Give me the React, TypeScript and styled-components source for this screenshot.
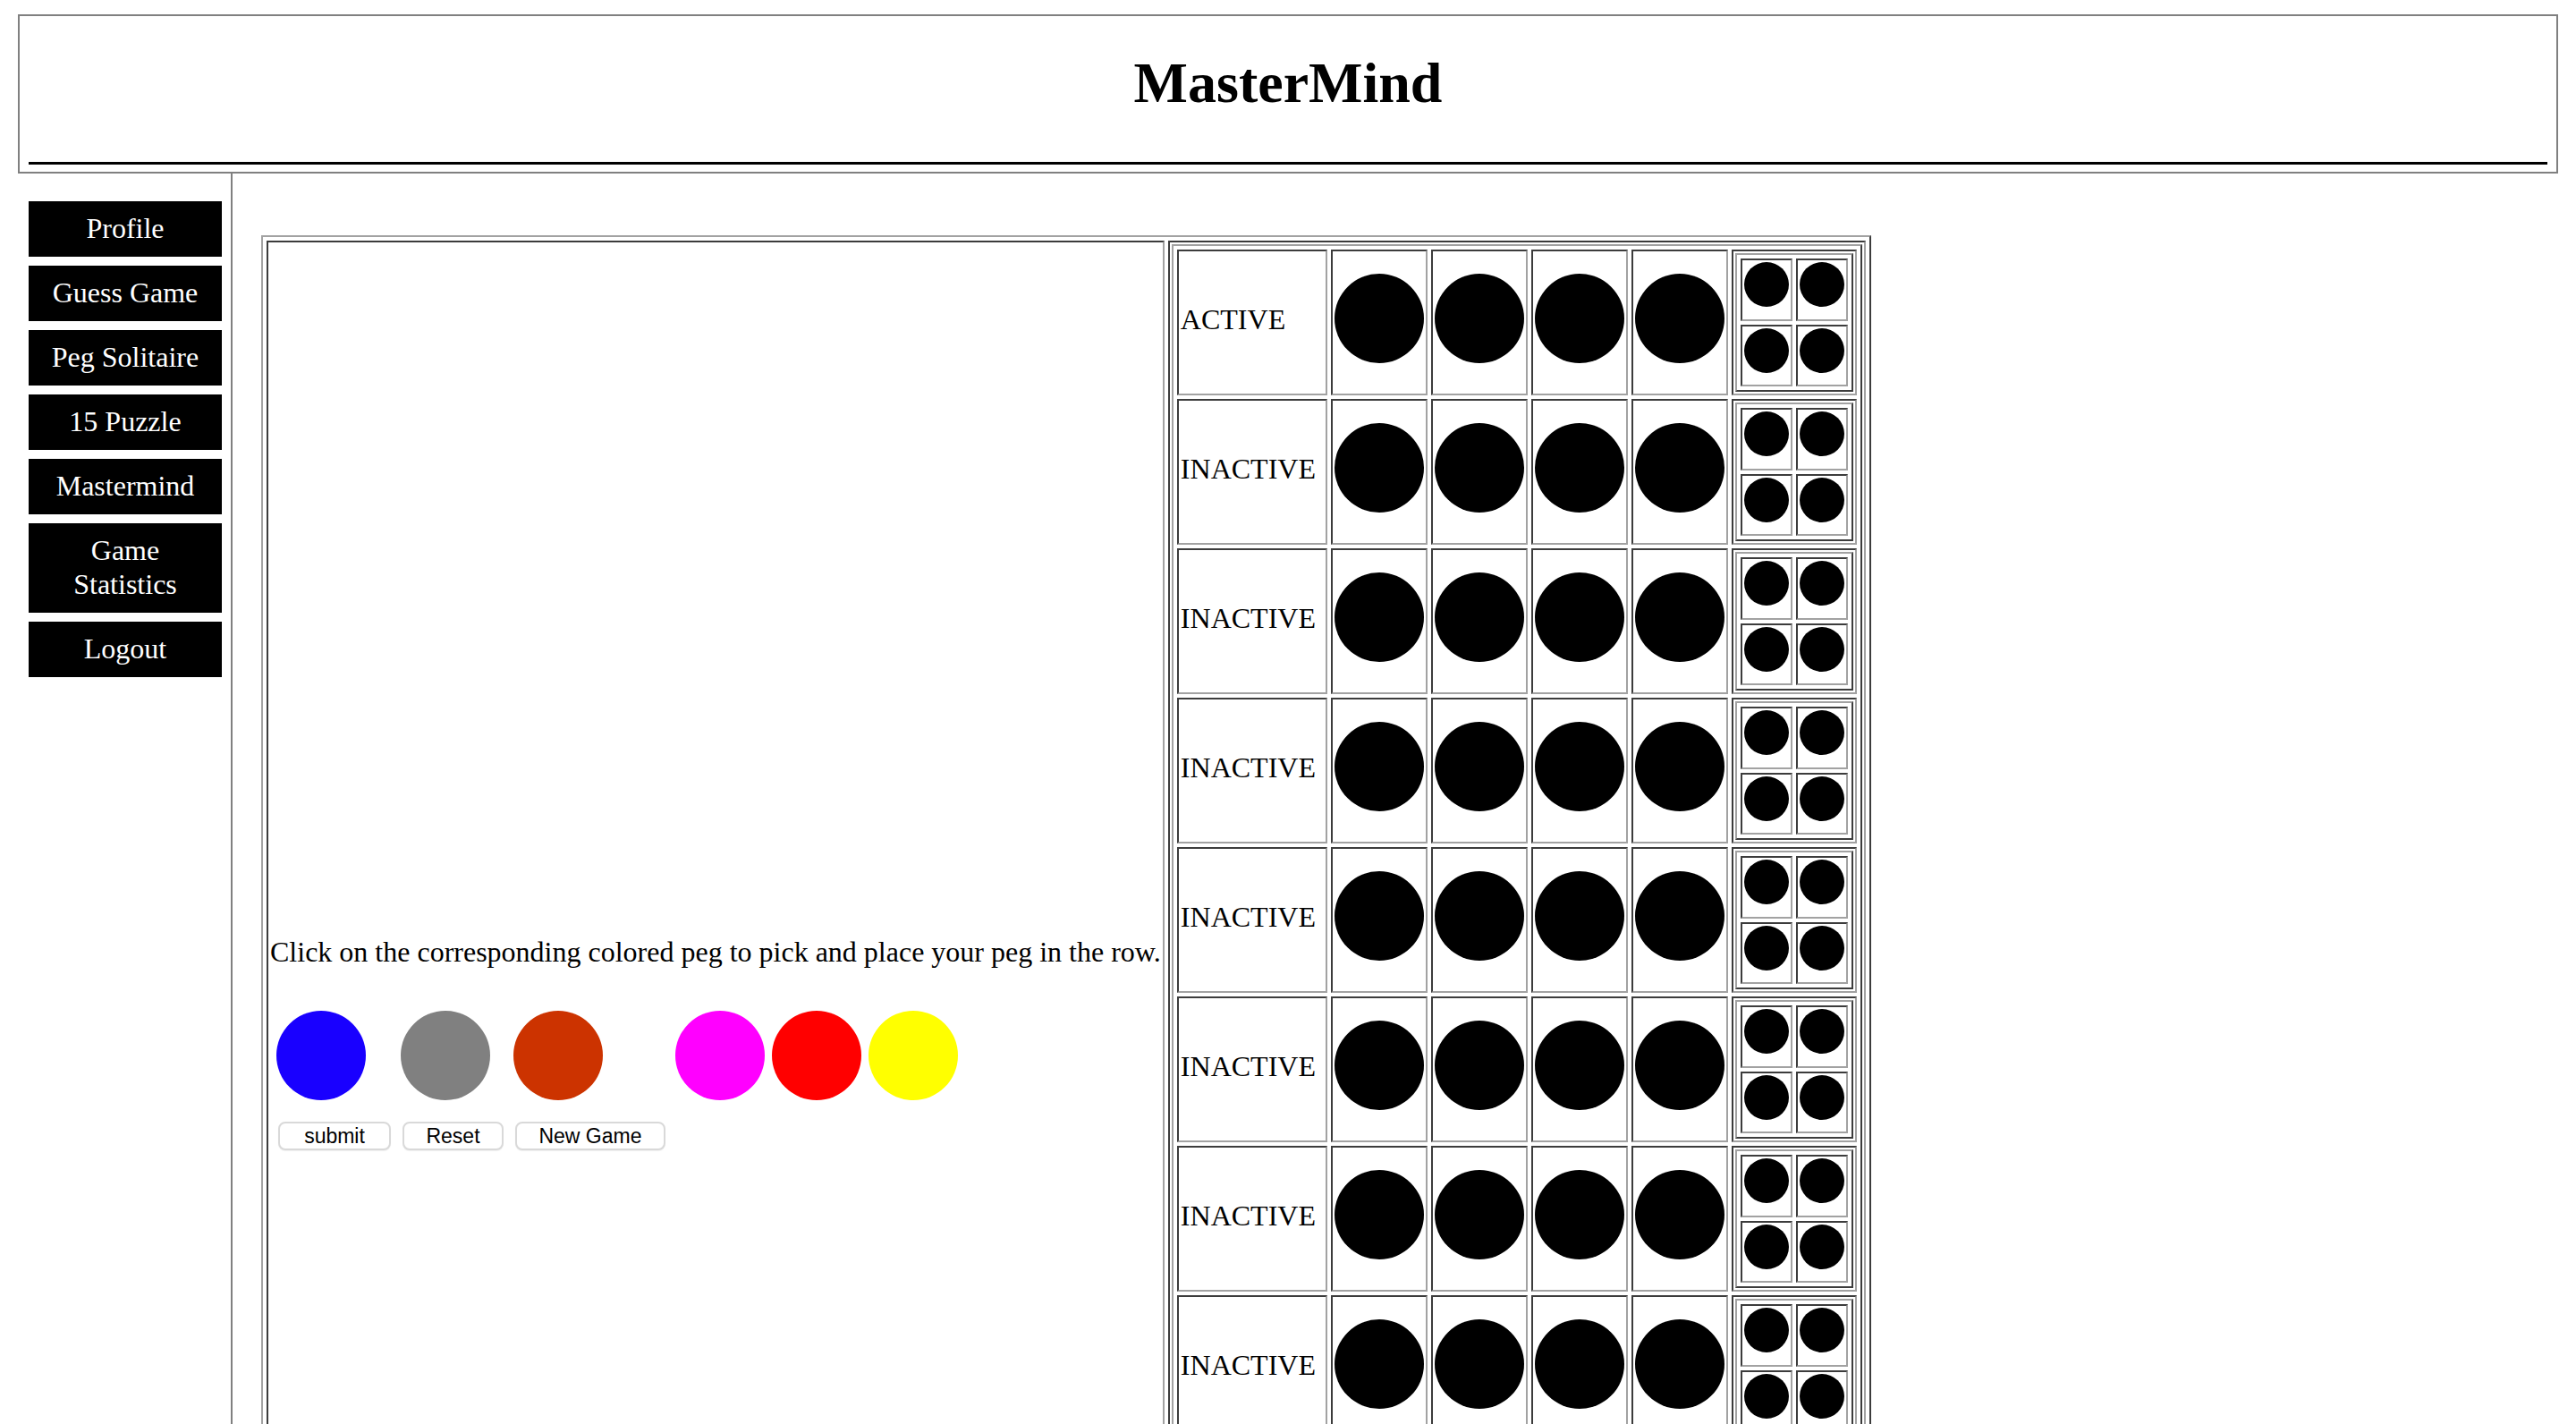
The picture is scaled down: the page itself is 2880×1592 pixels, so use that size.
import React from 'react';
import styled, { createGlobalStyle } from 'styled-components';

// outset / inset shades used by the old-school bordered tables
const LIGHT = '#a2a2a2';
const DARK = '#3c3c3c';

const GlobalStyle = createGlobalStyle`
    html, body {
        margin: 0;
        padding: 0;
        background: #fff;
        overflow: hidden;
    }
    body {
        font-family: "Liberation Serif", "Times New Roman", serif;
        color: #000;
    }
`;

const Header = styled.header`
    margin: 16px 20px 0;
    border: 2px solid #808080;
    padding: 0 10px 8px;
`;

const Title = styled.h1`
    margin: 38px 0 0;
    font-size: 64px;
    font-weight: bold;
    line-height: normal;
    text-align: center;
`;

const Rule = styled.hr`
    margin: 51px 0 0;
    border: 0;
    height: 3px;
    background: #000;
`;

const Layout = styled.div`
    display: flex;
    margin-left: 20px;
    min-height: calc(100vh - 194px);
`;

const Sidebar = styled.nav`
    flex-shrink: 0;
    width: 216px;
    padding: 31px 10px 0 12px;
    border-right: 2px solid #808080;
    display: flex;
    flex-direction: column;
    gap: 10px;
`;

const NavButton = styled.a`
    display: block;
    background: #000;
    color: #fff;
    font-size: 32px;
    line-height: 38px;
    padding: 11px 12px 13px;
    text-align: center;
    text-decoration: none;
`;

const Main = styled.main`
    padding: 69px 0 0 32px;
`;

const Table = styled.div`
    display: flex;
    border: 2px solid;
    border-color: ${LIGHT} ${DARK} ${DARK} ${LIGHT};
    padding: 4px;
    gap: 4px;
`;

const OuterTable = styled(Table)`
    align-items: stretch;
    width: max-content;
`;

const BoardTable = styled(Table)`
    flex-direction: column;
`;

const Cell = styled.div`
    border: 2px solid;
    border-color: ${DARK} ${LIGHT} ${LIGHT} ${DARK};
    padding: 2px;
`;

const LeftCell = styled(Cell)`
    padding-top: 775px;
    white-space: nowrap;
`;

const Instructions = styled.div`
    font-size: 32px;
    line-height: normal;
`;

const PegRow = styled.div`
    display: flex;
    align-items: flex-start;
    margin-top: 47px;
`;

const PickPeg = styled.div<{ $color: string; $gap: number }>`
    width: 100px;
    height: 100px;
    border-radius: 50%;
    background: ${(p) => p.$color};
    margin-left: ${(p) => p.$gap}px;
    cursor: pointer;
`;

const ButtonRow = styled.div`
    display: flex;
    gap: 13px;
    margin: 24px 0 0 9px;
`;

const ActionButton = styled.button<{ $width: number }>`
    box-sizing: border-box;
    width: ${(p) => p.$width}px;
    height: 32px;
    padding: 0;
    background: #fff;
    border: 2px solid #d9d9d9;
    border-radius: 8px;
    box-shadow: 0 1px 1px rgba(0, 0, 0, 0.06);
    font-family: "Liberation Sans", Arial, sans-serif;
    font-size: 23px;
    color: #000;
`;

const Row = styled.div`
    display: flex;
    gap: 4px;
`;

const LabelCell = styled(Cell)`
    width: 160px;
    display: flex;
    align-items: center;
    padding-bottom: 8px;
    font-size: 32px;
`;

const PegCell = styled(Cell)`
    width: 100px;
    display: flex;
    align-items: center;
    justify-content: center;
    padding-bottom: 12px;
`;

const Peg = styled.div<{ $size: number }>`
    width: ${(p) => p.$size}px;
    height: ${(p) => p.$size}px;
    border-radius: 50%;
    background: #000;
`;

const KeyTable = styled(Table)`
    display: grid;
    grid-template-columns: repeat(2, 58px);
    grid-auto-rows: 69.5px;
`;

const KeyCell = styled(Cell)`
    box-sizing: border-box;
`;

const navItems = ['Profile', 'Guess Game', 'Peg Solitaire', '15 Puzzle', 'Mastermind', 'Game Statistics', 'Logout'];

const palette = [
    { color: '#1900ff', gap: 7 },
    { color: '#808080', gap: 39 },
    { color: '#cc3300', gap: 26 },
    { color: '#ff00ff', gap: 81 },
    { color: '#ff0000', gap: 8 },
    { color: '#ffff00', gap: 8 }
];

const actions = [
    { label: 'submit', width: 126 },
    { label: 'Reset', width: 113 },
    { label: 'New Game', width: 168 }
];

const rows = Array.from({ length: 8 }, (_, i) => (i === 0 ? 'ACTIVE' : 'INACTIVE'));

const BoardRow = ({ status }: { status: string }) => (
    <Row>
        <LabelCell>{status}</LabelCell>
        {[0, 1, 2, 3].map((i) => (
            <PegCell key={i}>
                <Peg $size={100} />
            </PegCell>
        ))}
        <Cell>
            <KeyTable>
                {[0, 1, 2, 3].map((i) => (
                    <KeyCell key={i}>
                        <Peg $size={50} />
                    </KeyCell>
                ))}
            </KeyTable>
        </Cell>
    </Row>
);

export default function App() {
    return (
        <>
            <GlobalStyle />
            <Header>
                <Title>MasterMind</Title>
                <Rule />
            </Header>
            <Layout>
                <Sidebar>
                    {navItems.map((item) => (
                        <NavButton key={item}>{item}</NavButton>
                    ))}
                </Sidebar>
                <Main>
                    <OuterTable>
                        <LeftCell>
                            <Instructions>
                                Click on the corresponding colored peg to pick and place your peg in the row.
                            </Instructions>
                            <PegRow>
                                {palette.map((p) => (
                                    <PickPeg key={p.color} $color={p.color} $gap={p.gap} />
                                ))}
                            </PegRow>
                            <ButtonRow>
                                {actions.map((a) => (
                                    <ActionButton key={a.label} $width={a.width}>
                                        {a.label}
                                    </ActionButton>
                                ))}
                            </ButtonRow>
                        </LeftCell>
                        <Cell>
                            <BoardTable>
                                {rows.map((status, i) => (
                                    <BoardRow key={i} status={status} />
                                ))}
                            </BoardTable>
                        </Cell>
                    </OuterTable>
                </Main>
            </Layout>
        </>
    );
}
